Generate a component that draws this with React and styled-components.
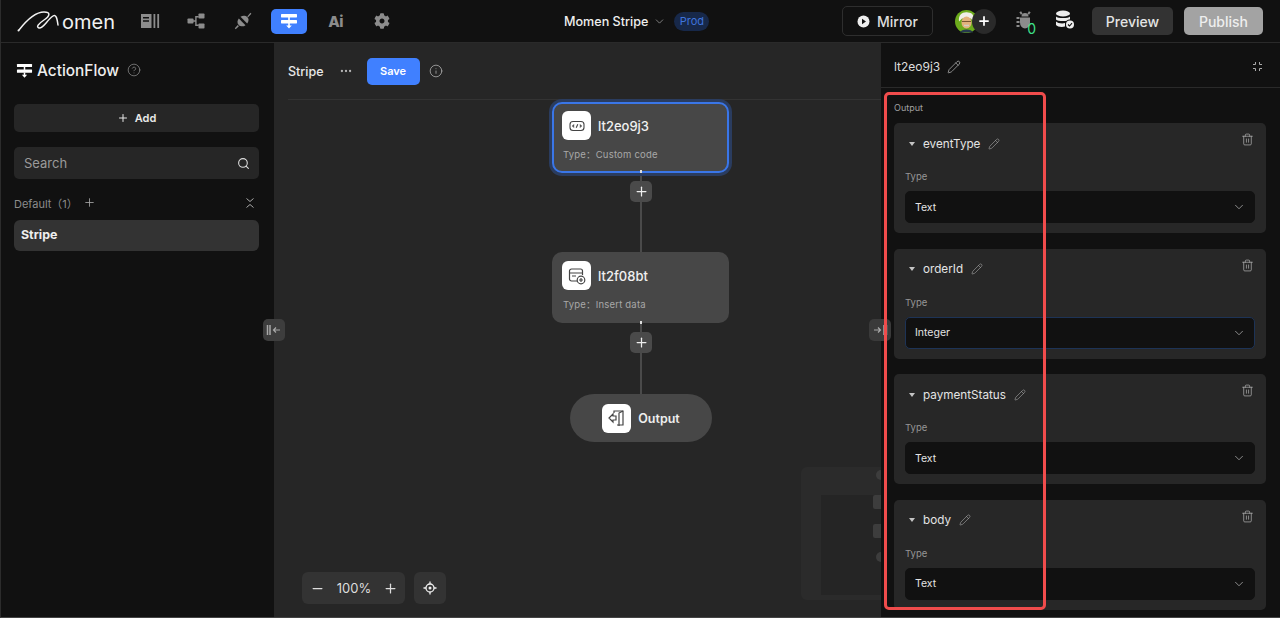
import React from 'react'
import styled, { createGlobalStyle } from 'styled-components'
import { ChevronDown, Pencil, Trash2, Search, Plus, Minus, Info, CircleHelp, Ellipsis } from 'lucide-react'
import { FaCog } from 'react-icons/fa'

const GlobalStyle = createGlobalStyle`
    html, body {
        margin: 0;
        height: 100%;
        background: #111;
    }
    body {
        font-family: Inter, "Liberation Sans", "Noto Sans CJK SC", sans-serif;
        color: #eee;
        overflow: hidden;
    }
    #root {
        height: 100%;
    }
    * {
        box-sizing: border-box;
    }
`

const Shell = styled.div`
    position: relative;
    width: 1280px;
    height: 618px;
    display: flex;
    flex-direction: column;
    background: #111;
    border-left: 1px solid #2c2c2c;
    border-bottom: 1px solid #444;
    overflow: hidden;
`

const TopBar = styled.header`
    flex: none;
    height: 43px;
    display: flex;
    align-items: center;
    border-bottom: 1px solid #2a2a2a;
    background: #111;
    padding-right: 17px;
`

const LogoWrap = styled.div`
    width: 122px;
    margin-left: 16px;
    height: 42px;
    display: flex;
    align-items: center;
    position: relative;
`

const LogoText = styled.span`
    font-size: 20px;
    font-weight: 400;
    color: #f2f2f2;
    margin-left: 45px;
    margin-top: 2px;
`

const Nav = styled.nav`
    display: flex;
    gap: 10.4px;
    width: 432px;
    margin-left: -7px;
`

const NavItem = styled.div`
    width: 36px;
    height: 25px;
    border-radius: 5px;
    display: flex;
    align-items: center;
    justify-content: center;
    color: ${props => props.$active ? '#fff' : '#8c8c8c'};
    background: ${props => props.$active ? '#4080ff' : 'transparent'};
`

const AiMark = styled.span`
    font-size: 15px;
    font-weight: 800;
    letter-spacing: -0.5px;
    color: #8c8c8c;
`

const ProjectName = styled.div`
    display: flex;
    align-items: center;
    font-size: 12.6px;
    font-weight: 500;
    color: #eee;
    gap: 5px;
`

const EnvPill = styled.span`
    margin-left: 8px;
    width: 35px;
    height: 19px;
    border-radius: 10px;
    background: #172849;
    color: #3f74dc;
    font-size: 11px;
    display: flex;
    align-items: center;
    justify-content: center;
`

const RightGroup = styled.div`
    margin-left: auto;
    display: flex;
    align-items: center;
`

const MirrorButton = styled.div`
    width: 91px;
    height: 30px;
    border: 1px solid #2e2e2e;
    border-radius: 5px;
    display: flex;
    align-items: center;
    justify-content: center;
    gap: 7px;
    font-size: 14px;
    font-weight: 500;
    color: #ddd;
`

const AvatarGroup = styled.div`
    margin-left: 22px;
    width: 41px;
    height: 25px;
    position: relative;
    display: flex;
    align-items: center;
`

const AddCircle = styled.div`
    position: absolute;
    left: 17px;
    top: 0;
    width: 24px;
    height: 25px;
    border-radius: 50%;
    background: #2a2a2a;
    display: flex;
    align-items: center;
    justify-content: center;
    color: #fff;
`

const BugWrap = styled.div`
    margin-left: 20px;
    width: 19px;
    height: 22px;
    position: relative;
    color: #8c8c8c;
`

const BugCount = styled.span`
    position: absolute;
    right: -1px;
    bottom: -3px;
    font-size: 14px;
    line-height: 13px;
    color: #3fe08a;
`

const DbWrap = styled.div`
    margin-left: 19px;
    width: 22px;
    height: 22px;
    display: flex;
`

const GreyButton = styled.div`
    height: 28px;
    width: ${props => props.$width}px;
    margin-left: ${props => props.$gap}px;
    border-radius: 5px;
    background: ${props => props.$light ? '#a3a3a3' : '#333'};
    color: ${props => props.$light ? '#eee' : '#e4e4e4'};
    display: flex;
    align-items: center;
    justify-content: center;
    font-size: 14px;
    font-weight: 500;
`

const Body = styled.div`
    flex: 1;
    min-height: 0;
    display: flex;
`

const Sidebar = styled.aside`
    flex: none;
    width: 273px;
    padding: 0 15px 0 13px;
    background: #111;
    display: flex;
    flex-direction: column;
`

const SideTitle = styled.div`
    height: 61px;
    padding: 0 2px 7px;
    display: flex;
    align-items: center;
    gap: 4px;
    font-size: 15.4px;
    font-weight: 500;
    color: #eee;
    svg:last-child {
        margin-left: 4px;
        color: #8a8a8a;
    }
`

const AddButton = styled.div`
    height: 28px;
    border-radius: 5px;
    background: #262626;
    display: flex;
    align-items: center;
    justify-content: center;
    gap: 6px;
    font-size: 11px;
    font-weight: 600;
    color: #e8e8e8;
`

const SearchBox = styled.div`
    height: 32px;
    margin-top: 15px;
    border-radius: 5px;
    background: #262626;
    display: flex;
    align-items: center;
    justify-content: space-between;
    padding: 0 9px 0 10px;
    font-size: 13px;
    color: #9a9a9a;
    svg {
        color: #ddd;
    }
`

const GroupRow = styled.div`
    height: 41px;
    padding-top: 6px;
    display: flex;
    align-items: center;
    font-size: 11px;
    color: #8c8c8c;
    svg {
        color: #aaa;
    }
`

const GroupAdd = styled.span`
    display: flex;
    margin-left: 5px;
`

const CollapseIcon = styled.span`
    margin-left: auto;
    margin-right: 4px;
    display: flex;
`

const FlowItem = styled.div`
    height: 31px;
    border-radius: 6px;
    background: #333;
    padding: 0 0 3px 7px;
    display: flex;
    align-items: center;
    font-size: 12.4px;
    font-weight: 700;
    color: #eee;
`

const Canvas = styled.main`
    flex: none;
    width: 607px;
    position: relative;
    background: #262626;
`

const CanvasHeader = styled.div`
    height: 57px;
    margin-left: 14px;
    border-bottom: 1px solid #333;
    display: flex;
    align-items: center;
    font-size: 12.5px;
    font-weight: 500;
    color: #e8e8e8;
    svg {
        color: #b5b5b5;
    }
`

const MoreIcon = styled.span`
    display: flex;
    margin-left: 15px;
`

const SaveButton = styled.div`
    margin-left: 14px;
    width: 53px;
    height: 27px;
    border-radius: 5px;
    background: #4080ff;
    color: #fff;
    font-size: 11px;
    font-weight: 600;
    display: flex;
    align-items: center;
    justify-content: center;
`

const InfoIcon = styled.span`
    display: flex;
    margin-left: 9px;
`

const Connector = styled.div`
    position: absolute;
    left: 366px;
    top: ${props => props.$top}px;
    height: ${props => props.$height}px;
    width: 2px;
    background: #4a4a4a;
`

const FlowNode = styled.div`
    position: absolute;
    left: 278px;
    top: ${props => props.$top}px;
    width: 177px;
    height: 71px;
    border-radius: 10px;
    background: #474747;
    padding: 9px 10px;
    border: ${props => props.$selected ? '2px solid #3a76e8' : 'none'};
    box-shadow: ${props => props.$selected ? '0 0 0 3px #2a3c5f' : 'none'};
    ${props => props.$selected ? 'padding: 7px 8px;' : ''}
`

const NodeHead = styled.div`
    display: flex;
    align-items: center;
    gap: 7px;
    font-size: 13px;
    font-weight: 500;
    color: #f0f0f0;
`

const NodeIcon = styled.div`
    width: 29px;
    height: 29px;
    flex: none;
    border-radius: 6px;
    background: #fff;
    display: flex;
    align-items: center;
    justify-content: center;
`

const NodeType = styled.div`
    margin-top: 7px;
    padding-left: 1px;
    font-size: 9.5px;
    letter-spacing: 0.2px;
    color: #a8a8a8;
    white-space: pre;
`

const NodeDot = styled.div`
    position: absolute;
    left: 366px;
    top: ${props => props.$top}px;
    width: 2px;
    height: 3px;
    background: #ddd;
`

const PlusButton = styled.div`
    position: absolute;
    left: 356px;
    top: ${props => props.$top}px;
    width: 22px;
    height: 21px;
    border-radius: 5px;
    background: #4a4a4a;
    color: #eee;
    display: flex;
    align-items: center;
    justify-content: center;
`

const OutputNode = styled.div`
    position: absolute;
    left: 296px;
    top: 351px;
    width: 142px;
    height: 48px;
    border-radius: 24px;
    background: #474747;
    display: flex;
    align-items: center;
    justify-content: center;
    gap: 7px;
    font-size: 12.5px;
    font-weight: 600;
    color: #eee;
`

const Minimap = styled.div`
    position: absolute;
    left: 527px;
    top: 424px;
    width: 80px;
    height: 133px;
    border-radius: 6px 0 0 6px;
    background: #2b2b2b;
    padding: 28px 0 5px 20px;
    display: flex;
`

const MinimapInner = styled.div`
    flex: 1;
    background: #252525;
`

const MinimapHandle = styled.div`
    position: absolute;
    right: 0;
    top: ${props => props.$top}px;
    width: ${props => props.$round ? 5 : 8}px;
    height: ${props => props.$round ? 10 : 14}px;
    background: #3d3d3d;
    border-radius: ${props => props.$round ? '5px 0 0 5px' : '2px 0 0 2px'};
`

const ZoomBar = styled.div`
    position: absolute;
    left: 28px;
    bottom: 13px;
    display: flex;
    gap: 9px;
`

const ZoomGroup = styled.div`
    width: 103px;
    height: 32px;
    border-radius: 6px;
    background: #333;
    display: flex;
    align-items: center;
    justify-content: space-between;
    padding: 0 7px 0 8px;
    font-size: 13px;
    color: #ddd;
`

const LocateButton = styled.div`
    width: 32px;
    height: 32px;
    border-radius: 6px;
    background: #333;
    display: flex;
    align-items: center;
    justify-content: center;
`

const CollapseHandle = styled.div`
    position: absolute;
    top: 276px;
    left: ${props => props.$left}px;
    width: 22px;
    height: 22px;
    border-radius: 5px;
    background: ${props => props.$dim ? '#3a3a3a' : '#3d3d3d'};
    display: flex;
    align-items: center;
    justify-content: center;
`

const Panel = styled.aside`
    flex: 1;
    min-width: 0;
    background: #111;
    display: flex;
    flex-direction: column;
`

const PanelHead = styled.div`
    flex: none;
    height: 45px;
    padding: 3px 17px 0 13px;
    border-bottom: 1px solid #2a2a2a;
    display: flex;
    align-items: center;
    gap: 7px;
    font-size: 12px;
    color: #ddd;
    svg {
        color: #b0b0b0;
    }
    svg:last-child {
        margin-left: auto;
    }
`

const PanelLabel = styled.div`
    height: 35px;
    padding: 14px 0 0 13px;
    font-size: 9px;
    color: #a0a0a0;
`

const CardList = styled.div`
    display: flex;
    flex-direction: column;
    gap: 15.5px;
    padding: 0 14px 0 13px;
`

const Card = styled.section`
    height: 110px;
    border-radius: 5px;
    background: #272727;
    padding: 0 11px;
    position: relative;
`

const CardTitle = styled.div`
    height: 41px;
    padding: 0 0 0 4px;
    display: flex;
    align-items: center;
    font-size: 11.7px;
    color: #e4e4e4;
    svg {
        color: #a8a8a8;
    }
`

const Caret = styled.span`
    width: 0;
    height: 0;
    border-left: 3.5px solid transparent;
    border-right: 3.5px solid transparent;
    border-top: 4px solid #c4c4c4;
    margin-right: 8px;
`

const EditIcon = styled.span`
    display: flex;
    margin-left: 8px;
`

const TrashIcon = styled.span`
    position: absolute;
    right: 12px;
    top: 10px;
    display: flex;
`

const TypeLabel = styled.div`
    font-size: 9.5px;
    color: #969696;
    height: 27px;
    padding-top: 7px;
`

const TypeSelect = styled.div`
    height: 32px;
    border-radius: 5px;
    background: #111;
    border: 1px solid ${props => props.$focused ? '#1d3356' : '#111'};
    padding: 0 8px 0 9px;
    display: flex;
    align-items: center;
    justify-content: space-between;
    font-size: 10.5px;
    color: #e4e4e4;
    svg {
        color: #b0b0b0;
    }
`

const Highlight = styled.div`
    position: absolute;
    left: 883px;
    top: 92px;
    width: 162px;
    height: 518px;
    border: 3px solid #f04c4c;
    border-radius: 5px;
    pointer-events: none;
`

const fields = [
    { name: 'eventType', type: 'Text' },
    { name: 'orderId', type: 'Integer', focused: true },
    { name: 'paymentStatus', type: 'Text' },
    { name: 'body', type: 'Text' }
]

function FlowIcon({ size = 18, color = '#fff' }) {
    return (
        <svg width={size} height={size} viewBox="0 0 18 18" fill={color}>
            <rect x="1" y="2" width="16" height="3.4" rx="0.6" />
            <rect x="1" y="8" width="16" height="3.4" rx="0.6" />
            <rect x="8.2" y="5" width="1.6" height="3.4" />
            <path d="M8.2 11h1.6v2.4h2L9 16.6 6.2 13.4h2z" />
        </svg>
    )
}

function Logo() {
    return (
        <LogoWrap>
            <svg width="50" height="24" viewBox="0 0 50 24" style={{ position: 'absolute', left: 0, top: 9 }} fill="none" stroke="#f2f2f2" strokeWidth="1.5" strokeLinecap="round">
                <path d="M2 21 C9 12 18 3 27 3 C34 3 33 7 27 11 C21 15 19 18 22 19 C26 20 30 11 36 7 C39 5 40 9 41 16" />
                <circle cx="1.5" cy="21.5" r="1" fill="#f2f2f2" stroke="none" />
            </svg>
            <LogoText>omen</LogoText>
        </LogoWrap>
    )
}

function Avatar() {
    return (
        <svg width="22" height="25" viewBox="0 0 22 24" style={{ position: 'absolute', left: 0, top: 0 }}>
            <circle cx="11.5" cy="12" r="11.5" fill="#6cab1c" />
            <path d="M4 12 C3 5 8 2 13 3 C18 3 20 8 19 13 L16 9 L7 9z" fill="#efeee6" />
            <ellipse cx="11.5" cy="13" rx="5" ry="6" fill="#e2b27c" />
            <path d="M7 12h9" stroke="#7a5632" strokeWidth="1" />
            <path d="M9 16h5" stroke="#cfcfc6" strokeWidth="1.5" />
            <path d="M5 23 C6 19 17 19 18 23z" fill="#26384d" />
        </svg>
    )
}

function BugIcon() {
    return (
        <svg width="18" height="20" viewBox="0 0 18 20" fill="currentColor">
            <path d="M4 7.5h10v5a5 6 0 0 1-10 0z" />
            <path d="M5.5 6.5a3.5 3.5 0 0 1 7 0z" />
            <rect x="0.5" y="7" width="3" height="2" />
            <rect x="0.5" y="11" width="3" height="2" />
            <rect x="0.5" y="15" width="3" height="2" />
            <rect x="4" y="1.5" width="2" height="3" transform="rotate(-30 5 3)" />
            <rect x="12" y="1.5" width="2" height="3" transform="rotate(30 13 3)" />
        </svg>
    )
}

function DbIcon() {
    return (
        <svg width="22" height="20" viewBox="0 0 22 20" fill="#eee">
            <ellipse cx="9" cy="3.5" rx="7" ry="3" />
            <path d="M2 6.5c1.5 2 12.5 2 14 0v3c-1.5 2-12.5 2-14 0z" />
            <path d="M2 11.5c1.5 2 7 2.3 9 1.5v3.5c-3 .8-7.5.5-9-1.5z" />
            <circle cx="16" cy="14.5" r="5" fill="#111" />
            <circle cx="16" cy="14.5" r="4" fill="#eee" />
            <path d="M14 14.5l1.500 1.500 2.500-2.800" stroke="#111" strokeWidth="1.1" fill="none" />
        </svg>
    )
}

function SplitHandleIcon({ flip }) {
    return (
        <svg width="16" height="12" viewBox="0 0 16 12" fill="none" stroke="#a8a8a8" strokeWidth="1.2" style={flip ? { transform: 'scaleX(-1)' } : undefined}>
            <path d="M1.5 1v10M4 1v10" strokeWidth="1.5" />
            <path d="M14 6H7.5M10 3.5L7.5 6 10 8.5" />
        </svg>
    )
}

export default function App() {
    return (
        <Shell>
            <GlobalStyle />
            <TopBar>
                <Logo />
                <Nav>
                    <NavItem>
                        <svg width="20" height="16" viewBox="0 0 20 16" fill="currentColor">
                            <path d="M1 1h10.5v14H1zM3 4v1.5h6V4zM3 7.2v1.5h6V7.2z" fillRule="evenodd" />
                            <rect x="13.5" y="1" width="1.8" height="14" />
                            <rect x="17.3" y="1" width="1.8" height="14" />
                        </svg>
                    </NavItem>
                    <NavItem>
                        <svg width="18" height="16" viewBox="0 0 18 16" fill="currentColor">
                            <rect x="0.5" y="5.5" width="6" height="5" rx="0.8" />
                            <rect x="11.5" y="0.5" width="6" height="5" rx="0.8" />
                            <rect x="11.5" y="10.5" width="6" height="5" rx="0.8" />
                            <path d="M6 7.3h2.2V3h3.5v1.400H9.600v7.200h2.100V13H8.200V8.700H6z" />
                        </svg>
                    </NavItem>
                    <NavItem>
                        <svg width="18" height="18" viewBox="0 0 18 18" fill="currentColor">
                            <path d="M4.8 6.5l6.7 6.700c-2.200 1.700-5 1.500-6.800-.3s-1.600-4.200.1-6.400z" />
                            <path d="M6.5 4.800c2.200-1.700 5-1.500 6.800.3s1.600 4.200-.1 6.400z" />
                            <path d="M0.8 16.300l3-3.200 1.100 1.100-3.200 3zM13.300 4.500l3.100-3.800 1 1-3.300 3.600z" />
                        </svg>
                    </NavItem>
                    <NavItem $active>
                        <FlowIcon />
                    </NavItem>
                    <NavItem>
                        <AiMark>Ai</AiMark>
                    </NavItem>
                    <NavItem>
                        <FaCog size={16} />
                    </NavItem>
                </Nav>
                <ProjectName>
                    Momen Stripe
                    <ChevronDown size={13} strokeWidth={1.3} color="#aaa" />
                </ProjectName>
                <EnvPill>Prod</EnvPill>
                <RightGroup>
                    <MirrorButton>
                        <svg width="13" height="13" viewBox="0 0 13 13">
                            <circle cx="6.5" cy="6.5" r="6" fill="#eee" />
                            <path d="M5 3.8l4 2.7-4 2.7z" fill="#111" />
                        </svg>
                        Mirror
                    </MirrorButton>
                    <AvatarGroup>
                        <Avatar />
                        <AddCircle><Plus size={14} strokeWidth={3} /></AddCircle>
                    </AvatarGroup>
                    <BugWrap>
                        <BugIcon />
                        <BugCount>0</BugCount>
                    </BugWrap>
                    <DbWrap><DbIcon /></DbWrap>
                    <GreyButton $width={81} $gap={16}>Preview</GreyButton>
                    <GreyButton $width={79} $gap={11} $light>Publish</GreyButton>
                </RightGroup>
            </TopBar>
            <Body>
                <Sidebar>
                    <SideTitle>
                        <FlowIcon size={17} />
                        ActionFlow
                        <CircleHelp size={14} strokeWidth={1.3} />
                    </SideTitle>
                    <AddButton><Plus size={12} />Add</AddButton>
                    <SearchBox>
                        Search
                        <Search size={13} />
                    </SearchBox>
                    <GroupRow>
                        Default（1）
                        <GroupAdd><Plus size={13} strokeWidth={1.5} /></GroupAdd>
                        <CollapseIcon>
                            <svg width="10" height="12" viewBox="0 0 10 12" fill="none" stroke="#aaa" strokeWidth="1">
                                <path d="M1.5 1.5L5 4.5l3.5-3M1.5 10.5L5 7.5l3.5 3" />
                            </svg>
                        </CollapseIcon>
                    </GroupRow>
                    <FlowItem>Stripe</FlowItem>
                </Sidebar>
                <Canvas>
                    <CanvasHeader>
                        Stripe
                        <MoreIcon><Ellipsis size={14} /></MoreIcon>
                        <SaveButton>Save</SaveButton>
                        <InfoIcon><Info size={14} strokeWidth={1.3} /></InfoIcon>
                    </CanvasHeader>
                    <Connector $top={128} $height={81} />
                    <Connector $top={279} $height={72} />
                    <FlowNode $top={59} $selected>
                        <NodeHead>
                            <NodeIcon>
                                <svg width="16" height="12" viewBox="0 0 16 12" fill="none" stroke="#444" strokeWidth="1.1">
                                    <rect x="1" y="1.5" width="14" height="9" rx="3" />
                                    <path d="M5.2 4.7L3.7 6l1.5 1.3M10.8 4.7L12.3 6l-1.5 1.3M8.8 4.2L7.2 7.8" />
                                </svg>
                            </NodeIcon>
                            lt2eo9j3
                        </NodeHead>
                        <NodeType>Type：Custom code</NodeType>
                    </FlowNode>
                    <NodeDot $top={127} />
                    <PlusButton $top={138}><Plus size={15} /></PlusButton>
                    <FlowNode $top={209}>
                        <NodeHead>
                            <NodeIcon>
                                <svg width="18" height="18" viewBox="0 0 18 18" fill="none" stroke="#444" strokeWidth="1.2">
                                    <path d="M9 14H3.5a2 2 0 0 1-2-2V4a2 2 0 0 1 2-2h9a2 2 0 0 1 2 2v4" />
                                    <path d="M1.5 6h13M4 9h4" />
                                    <circle cx="13" cy="13" r="3.8" />
                                    <path d="M13 11v4M11 13h4" />
                                </svg>
                            </NodeIcon>
                            lt2f08bt
                        </NodeHead>
                        <NodeType>Type：Insert data</NodeType>
                    </FlowNode>
                    <NodeDot $top={278} />
                    <PlusButton $top={289}><Plus size={15} /></PlusButton>
                    <OutputNode>
                        <NodeIcon>
                            <svg width="18" height="18" viewBox="0 0 18 18" fill="none" stroke="#444" strokeWidth="1.2">
                                <path d="M6 4V2h9v14H9" />
                                <path d="M15 2l-4 2v13M8 7H5V5L1 9l4 4v-2h3z" />
                            </svg>
                        </NodeIcon>
                        Output
                    </OutputNode>
                    <Minimap>
                        <MinimapInner />
                        <MinimapHandle $round $top={3} />
                        <MinimapHandle $top={28} />
                        <MinimapHandle $top={57} />
                        <MinimapHandle $round $top={85} />
                    </Minimap>
                    <ZoomBar>
                        <ZoomGroup>
                            <Minus size={15} />
                            100%
                            <Plus size={15} />
                        </ZoomGroup>
                        <LocateButton>
                            <svg width="14" height="14" viewBox="0 0 14 14" fill="none" stroke="#eee" strokeWidth="1.3">
                                <circle cx="7" cy="7" r="4" />
                                <circle cx="7" cy="7" r="1.5" fill="#eee" stroke="none" />
                                <path d="M7 0.5v2.5M7 11v2.5M0.5 7H3M11 7h2.5" />
                            </svg>
                        </LocateButton>
                    </ZoomBar>
                    <CollapseHandle $left={-11}><SplitHandleIcon /></CollapseHandle>
                    <CollapseHandle $left={595} $dim><SplitHandleIcon flip /></CollapseHandle>
                </Canvas>
                <Panel>
                    <PanelHead>
                        lt2eo9j3
                        <Pencil size={14} strokeWidth={1.3} />
                        <svg width="11" height="11" viewBox="0 0 11 11" fill="none" stroke="#aaa" strokeWidth="1">
                            <path d="M3.5 1v2.5H1M7.5 1v2.5H10M3.5 10V7.500H1M7.500 10V7.500H10" />
                        </svg>
                    </PanelHead>
                    <PanelLabel>Output</PanelLabel>
                    <CardList>
                        {fields.map(field => (
                            <Card key={field.name}>
                                <CardTitle>
                                    <Caret />
                                    {field.name}
                                    <EditIcon><Pencil size={12} strokeWidth={1.2} /></EditIcon>
                                </CardTitle>
                                <TrashIcon><Trash2 size={13} strokeWidth={1.3} color="#b5b5b5" /></TrashIcon>
                                <TypeLabel>Type</TypeLabel>
                                <TypeSelect $focused={field.focused}>
                                    {field.type}
                                    <ChevronDown size={14} strokeWidth={1.3} />
                                </TypeSelect>
                            </Card>
                        ))}
                    </CardList>
                </Panel>
            </Body>
            <Highlight />
        </Shell>
    )
}
